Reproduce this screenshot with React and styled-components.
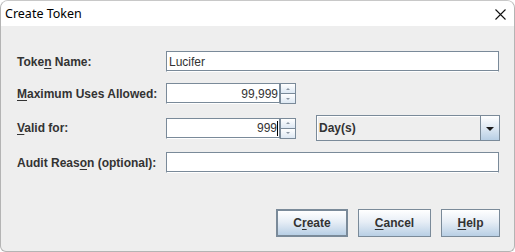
import React from 'react';
import styled, { createGlobalStyle } from 'styled-components';

const GlobalStyle = createGlobalStyle`
  html, body {
    margin: 0;
    padding: 0;
    background: #ffffff;
  }
  body {
    font-family: "Liberation Sans", Arial, sans-serif;
  }
`;

const Window = styled.div`
  width: 515px;
  height: 252px;
  box-sizing: border-box;
  border: 1px solid #b4b4b4;
  border-top-color: #c8c8c8;
  border-radius: 8px 8px 6px 6px;
  overflow: hidden;
  display: flex;
  flex-direction: column;
  background: #eeeeee;
`;

const TitleBar = styled.div`
  height: 25px;
  flex: none;
  background: #ffffff;
  display: flex;
  align-items: center;
  justify-content: space-between;
  padding: 0 8px 0 4px;
  font-family: "Noto Sans", "Open Sans", sans-serif;
  font-size: 12.5px;
  color: #000;
`;

const CloseIcon = styled.svg`
  width: 11px;
  height: 11px;
  margin-top: 1px;
`;

const Body = styled.div`
  flex: 1;
  display: flex;
  flex-direction: column;
  padding: 25px 14px 0 16px;
`;

const Form = styled.div`
  display: flex;
  flex-direction: column;
  gap: 11px;
`;

const Row = styled.div`
  display: flex;
  align-items: center;
  height: ${p => p.$h || 21}px;
`;

const Label = styled.label`
  width: 149px;
  flex: none;
  font-size: 12px;
  font-weight: bold;
  color: #333333;
  u { text-decoration-thickness: 1px; text-underline-offset: 2px; }
`;

const TextField = styled.div`
  box-sizing: border-box;
  height: 21px;
  width: ${p => p.$w ? `${p.$w}px` : 'auto'};
  flex: ${p => p.$w ? 'none' : 1};
  margin-right: ${p => p.$w ? 0 : 1}px;
  background: #ffffff;
  border: 1px solid #7a8a99;
  border-bottom-color: #ffffff;
  box-shadow: inset 0 -1px 0 #7a8a99;
  display: flex;
  align-items: center;
  justify-content: ${p => p.$right ? 'flex-end' : 'flex-start'};
  padding: 0 1px 0 2px;
  font-size: 12px;
  color: #333333;
`;

const Caret = styled.span`
  border-right: 1px solid #000;
  height: 15px;
  line-height: 15px;
`;

const Spinner = styled.div`
  display: flex;
  flex: none;
`;

const SpinButtons = styled.div`
  display: flex;
  flex-direction: column;
  width: 16px;
  height: 21px;
`;

const SpinButton = styled.div`
  flex: 1;
  box-sizing: border-box;
  border: 1px solid #7a8a99;
  border-top-width: ${p => p.$down ? 0 : 1}px;
  background: linear-gradient(#ffffff, #dde8f3);
  display: flex;
  align-items: center;
  justify-content: center;
  &::after {
    content: '';
    border-left: 2px solid transparent;
    border-right: 2px solid transparent;
    ${p => p.$down ? 'border-top: 2px solid #8a96a3;' : 'border-bottom: 2px solid #8a96a3;'}
  }
`;

const Combo = styled.div`
  box-sizing: border-box;
  margin-left: 20px;
  width: 184px;
  height: 26px;
  border: 1px solid #7a8a99;
  display: flex;
  background: #eeeeee;
`;

const ComboValue = styled.div`
  flex: 1;
  display: flex;
  align-items: center;
  padding-left: 2px;
  font-size: 12px;
  font-weight: bold;
  color: #333333;
  border-right: 1px solid #7a8a99;
  box-shadow: inset 1px 1px 0 #ffffff;
`;

const ComboArrow = styled.div`
  width: 18px;
  flex: none;
  background: linear-gradient(#ffffff, #dde8f3 50%, #b8cfe5);
  display: flex;
  align-items: center;
  justify-content: center;
  &::after {
    content: '';
    border-left: 4px solid transparent;
    border-right: 4px solid transparent;
    border-top: 4px solid #1a1a1a;
    margin-top: 1px;
  }
`;

const ButtonBar = styled.div`
  display: flex;
  justify-content: flex-end;
  gap: 10px;
  margin-top: 36px;
`;

const Button = styled.div`
  box-sizing: border-box;
  height: 28px;
  width: ${p => p.$w}px;
  border: ${p => p.$default ? 2 : 1}px solid #7a8a99;
  background: linear-gradient(#ffffff, #e7eef6 45%, #b8cfe5);
  display: flex;
  align-items: center;
  justify-content: center;
  font-size: 12px;
  font-weight: bold;
  color: #333333;
  u { text-decoration-thickness: 1px; text-underline-offset: 2px; }
`;

export default function App() {
  return (
    <>
      <GlobalStyle />
      <Window>
        <TitleBar>
          <span>Create Token</span>
          <CloseIcon viewBox="0 0 11 11">
            <path d="M0.5 0.5 L10.5 10.5 M10.5 0.5 L0.5 10.5" stroke="#111" strokeWidth="1.1" />
          </CloseIcon>
        </TitleBar>
        <Body>
          <Form>
            <Row>
              <Label>Toke<u>n</u> Name:</Label>
              <TextField>Lucifer</TextField>
            </Row>
            <Row>
              <Label><u>M</u>aximum Uses Allowed:</Label>
              <Spinner>
                <TextField $w={114} $right>99,999</TextField>
                <SpinButtons>
                  <SpinButton />
                  <SpinButton $down />
                </SpinButtons>
              </Spinner>
            </Row>
            <Row $h={26}>
              <Label><u>V</u>alid for:</Label>
              <Spinner>
                <TextField $w={114} $right><Caret>999</Caret></TextField>
                <SpinButtons>
                  <SpinButton />
                  <SpinButton $down />
                </SpinButtons>
              </Spinner>
              <Combo>
                <ComboValue>Day(s)</ComboValue>
                <ComboArrow />
              </Combo>
            </Row>
            <Row>
              <Label>Audit Reas<u>o</u>n (optional):</Label>
              <TextField />
            </Row>
          </Form>
          <ButtonBar>
            <Button $w={72} $default>C<u>r</u>eate</Button>
            <Button $w={73}><u>C</u>ancel</Button>
            <Button $w={59}><u>H</u>elp</Button>
          </ButtonBar>
        </Body>
      </Window>
    </>
  );
}
